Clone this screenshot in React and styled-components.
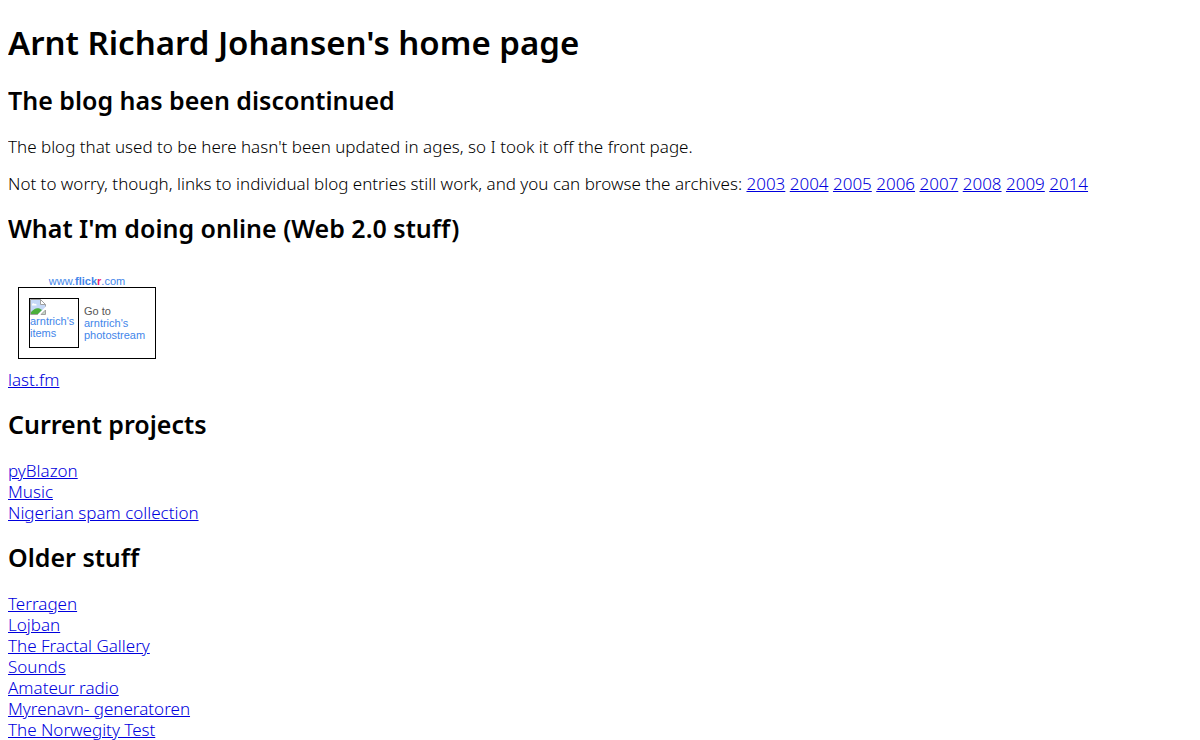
import React from 'react'
import styled, { createGlobalStyle } from 'styled-components'

const GlobalStyle = createGlobalStyle`
  body {
    margin: 8px;
    background-color: white;
    color: black;
    font-family: "Noto Sans", "Open Sans", sans-serif;
    font-size: 17px;
    font-weight: 300;
    line-height: 21px;
  }
`

const Title = styled.h1`
  margin: 13px 0 19px;
  font-size: 33px;
  line-height: 44px;
  font-weight: 600;
`

const Heading = styled.h2`
  margin: 18px 0 20px;
  font-size: 25px;
  line-height: 32px;
  font-weight: 600;
`

const Paragraph = styled.p`
  margin: 16px 0;
`

const Link = styled.a`
  color: #0000dd;
  text-decoration: underline;
`

const List = styled.div`
  display: flex;
  flex-direction: column;
  align-items: flex-start;
`

const Badge = styled.div`
  width: 138px;
  margin: 31px 10px 10px;
  font-family: "Liberation Sans", Arial, sans-serif;
  font-size: 11px;
  font-weight: 400;
  line-height: 12px;
`

const BadgeLink = styled.a`
  color: #4386ea;
  text-decoration: none;
`

const BadgeTop = styled(BadgeLink)`
  display: block;
  text-align: center;
`

const Pink = styled.span`
  color: #f02070;
`

const BadgeBox = styled.div`
  display: flex;
  align-items: center;
  gap: 5px;
  padding: 10px;
  border: 1px solid black;
`

const Thumb = styled(BadgeLink)`
  flex: none;
  width: 48px;
  height: 48px;
  border: 1px solid black;
`

const BrokenIcon = styled.svg`
  display: block;
  width: 16px;
  height: 16px;
`

const BadgeText = styled.div`
  color: #555555;
`

const years = ['2003', '2004', '2005', '2006', '2007', '2008', '2009', '2014']
const projects = ['pyBlazon', 'Music', 'Nigerian spam collection']
const older = [
  'Terragen',
  'Lojban',
  'The Fractal Gallery',
  'Sounds',
  'Amateur radio',
  'Myrenavn- generatoren',
  'The Norwegity Test',
]

const LinkList = ({ items }) => {
  return (
    <List>
      {items.map((item) => (
        <Link href="#" key={item}>{item}</Link>
      ))}
    </List>
  )
}

const BrokenImage = () => {
  return (
    <BrokenIcon viewBox="0 0 16 16" aria-hidden="true">
      <path d="M0.5 0.5H10.5L15.5 5.5V8L8 15.5H0.5Z" fill="#c5d8f7" />
      <path d="M2 5.5C2.5 4 4 4 4.5 5C6 4.5 7 5.5 6.5 6.5H2Z" fill="#fff" />
      <path d="M1 13C4 9.5 6.500 8.500 9.500 9.500L12 11L8 15H1Z" fill="#4caf3c" />
      <path d="M0.5 15.5V0.5H10.5L15.5 5.5V7.5M0.5 15.5H8" fill="none" stroke="#a0a0a0" />
      <path d="M10.5 0.5V5.5H15.5Z" fill="#fff" stroke="#a0a0a0" />
      <path d="M16 8L7.5 16H9.5L16 10Z" fill="#fff" />
      <path d="M15.5 11V15.5H11Z" fill="#c5d8c5" stroke="#a0a0a0" />
    </BrokenIcon>
  )
}

const App = () => {
  return (
    <>
      <GlobalStyle />
      <Title>Arnt Richard Johansen's home page</Title>
      <Heading>The blog has been discontinued</Heading>
      <Paragraph>
        The blog that used to be here hasn't been updated in ages, so I took it off the front page.
      </Paragraph>
      <Paragraph>
        Not to worry, though, links to individual blog entries still work, and you can browse the archives:
        {years.map((year) => (
          <React.Fragment key={year}> <Link href="#">{year}</Link></React.Fragment>
        ))}
      </Paragraph>
      <Heading>What I'm doing online (Web 2.0 stuff)</Heading>
      <Badge>
        <BadgeTop href="#">www.<b>flick<Pink>r</Pink></b>.com</BadgeTop>
        <BadgeBox>
          <Thumb href="#">
            <BrokenImage />
            arntrich's items
          </Thumb>
          <BadgeText>
            Go to <BadgeLink href="#">arntrich's photostream</BadgeLink>
          </BadgeText>
        </BadgeBox>
      </Badge>
      <LinkList items={['last.fm']} />
      <Heading>Current projects</Heading>
      <LinkList items={projects} />
      <Heading>Older stuff</Heading>
      <LinkList items={older} />
    </>
  )
}

export default App
